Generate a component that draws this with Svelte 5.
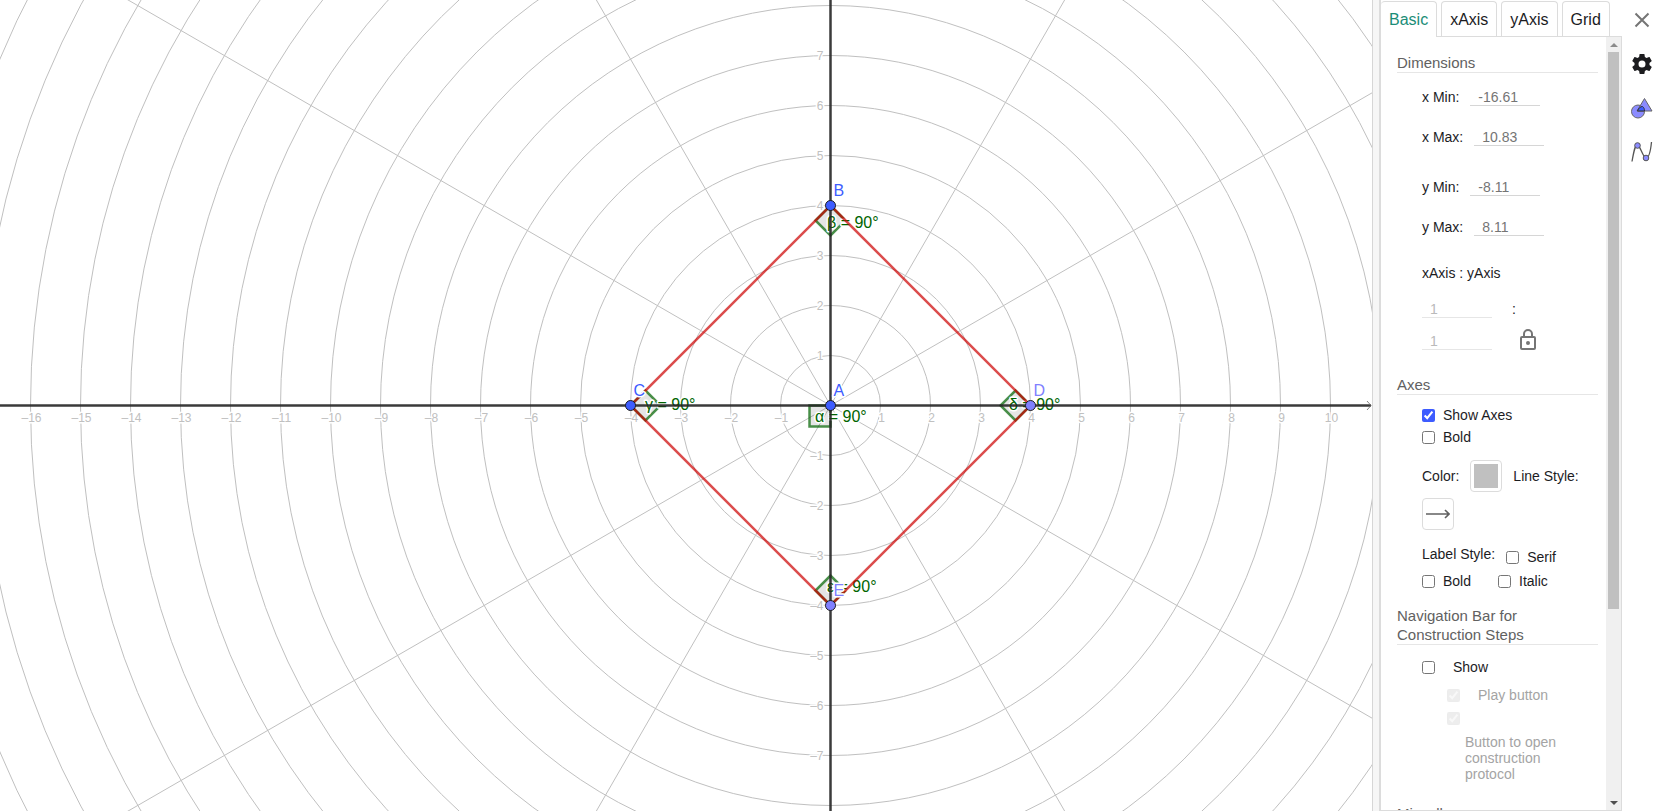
<script>
    const UNIT = 50;
    const OX = 830.5;
    const OY = 405.5;

    const range = (from, to) => Array.from({ length: to - from + 1 }, (_, i) => from + i);
    const px = (x) => OX + x * UNIT;
    const py = (y) => OY - y * UNIT;
    const label = (n) => (n < 0 ? "–" + -n : "" + n);

    const circles = range(1, 19);
    const rays = [30, 60, 120, 150].map((deg) => {
        const a = (deg * Math.PI) / 180;
        return { dx: Math.cos(a) * 1000, dy: Math.sin(a) * 1000 };
    });
    const xTicks = range(-16, 10).filter((n) => n !== 0);
    const yTicks = range(-7, 7).filter((n) => n !== 0);

    // free points are solid blue, dependent ones lighter
    const points = [
        { name: "A", x: 0, y: 0, color: "#3d5cff" },
        { name: "B", x: 0, y: 4, color: "#3d5cff" },
        { name: "C", x: -4, y: 0, color: "#3d5cff" },
        { name: "D", x: 4, y: 0, color: "#8080ff" },
        { name: "E", x: 0, y: -4, color: "#8080ff" },
    ];

    const angles = [
        { name: "α", x: 0, y: 0, path: "h-21v21h21z", lx: 815, ly: 422 },
        { name: "β", x: 0, y: 4, path: "l-15 15l15 15l15 -15z", lx: 827, ly: 228 },
        { name: "γ", x: -4, y: 0, path: "l15 -15l15 15l-15 15z", lx: 645, ly: 410 },
        { name: "δ", x: 4, y: 0, path: "l-15 -15l-15 15l15 15z", lx: 1009, ly: 410 },
        { name: "ε", x: 0, y: -4, path: "l-15 -15l15 -15l15 15z", lx: 827, ly: 592 },
    ];

    const tabs = ["Basic", "xAxis", "yAxis", "Grid"];
    let activeTab = $state("Basic");

    let limits = $state([
        { id: "xmin", label: "x Min:", value: "-16.61" },
        { id: "xmax", label: "x Max:", value: "10.83" },
        { id: "ymin", label: "y Min:", value: "-8.11" },
        { id: "ymax", label: "y Max:", value: "8.11" },
    ]);

    let showAxes = $state(true);
    let boldAxes = $state(false);
    let serif = $state(false);
    let boldLabels = $state(false);
    let italic = $state(false);
    let showNav = $state(false);

    let content;
    function scrollPanel(step) {
        content.scrollBy({ top: step, behavior: "smooth" });
    }
</script>

<div class="app">
    <main class="graphics">
        <svg class="plane" viewBox="0 0 1372 811" preserveAspectRatio="xMinYMid slice">
            <g class="grid">
                {#each circles as n}
                    <circle cx={OX} cy={OY} r={n * UNIT} />
                {/each}
                {#each rays as r}
                    <line x1={OX - r.dx} y1={OY + r.dy} x2={OX + r.dx} y2={OY - r.dy} />
                {/each}
            </g>

            <g class="ticks">
                {#each xTicks as n}
                    <text x={px(n) + 1} y={OY + 16} text-anchor="middle">{label(n)}</text>
                {/each}
                {#each yTicks as n}
                    <text x={OX - 7} y={py(n) + 4} text-anchor="end">{label(n)}</text>
                {/each}
            </g>

            {#each angles as a}
                <path class="angle" d="M{px(a.x)} {py(a.y)}{a.path}" />
            {/each}
            {#each angles as a}
                <text class="angle_label" x={a.lx} y={a.ly}>{a.name} = 90°</text>
            {/each}

            <path class="square" d="M{px(0)} {py(4)}L{px(4)} {py(0)}L{px(0)} {py(-4)}L{px(-4)} {py(0)}z" />

            {#if showAxes}
                <g class="axes" class:bold={boldAxes}>
                    <line x1="0" y1={OY} x2="1371" y2={OY} />
                    <line x1={OX} y1="0" x2={OX} y2="811" />
                    <path d="M1367 401l4 4.500l-4 4.500" />
                </g>
            {/if}

            {#each points as p}
                <circle class="point" cx={px(p.x)} cy={py(p.y)} r="5" fill={p.color} />
                <text class="point_label" x={px(p.x) + 3} y={py(p.y) - 10} fill={p.color}>{p.name}</text>
            {/each}
        </svg>
    </main>

    <div class="splitter"></div>

    <section class="panel">
        <nav class="tabs">
            {#each tabs as t}
                <button class="tab" class:active={activeTab === t} onclick={() => (activeTab = t)}>{t}</button>
            {/each}
        </nav>

        <div class="body">
            <div class="content" bind:this={content}>
                <h2>Dimensions</h2>
                <div class="limits">
                    {#each limits as l}
                        <div class="limit">
                            <label for={l.id}>{l.label}</label>
                            <input id={l.id} type="text" bind:value={l.value} />
                        </div>
                    {/each}
                </div>
                <div class="ratio_title">xAxis : yAxis</div>
                <div class="ratio">
                    <input type="text" value="1" aria-label="xAxis ratio" disabled />
                    <span>:</span>
                </div>
                <div class="ratio">
                    <input type="text" value="1" aria-label="yAxis ratio" disabled />
                    <button class="lock" aria-label="Lock ratio">
                        <svg width="24" height="24" viewBox="0 0 24 24" fill="none" stroke="#757575" stroke-width="2">
                            <rect x="5" y="8" width="14" height="12" rx="1" />
                            <path d="M8 8V5a4 4 0 0 1 8 0v3" />
                            <circle cx="12" cy="14" r="2" fill="#757575" stroke="none" />
                        </svg>
                    </button>
                </div>

                <h2 class="section">Axes</h2>
                <div class="checks">
                    <label class="check"><input type="checkbox" bind:checked={showAxes} />Show Axes</label>
                    <label class="check"><input type="checkbox" bind:checked={boldAxes} />Bold</label>
                </div>
                <div class="styles">
                    <span>Color:</span>
                    <button class="box" aria-label="Color"><span class="swatch"></span></button>
                    <span>Line Style:</span>
                    <button class="box" aria-label="Line Style">
                        <svg width="24" height="24" viewBox="0 0 24 24" fill="none" stroke="#616161" stroke-width="1.6">
                            <path d="M0 12h23M19 8l4 4l-4 4" />
                        </svg>
                    </button>
                </div>
                <div class="label_style">
                    <span class="caption">Label Style:</span>
                    <label class="check"><input type="checkbox" bind:checked={serif} />Serif</label>
                </div>
                <div class="label_style second">
                    <label class="check"><input type="checkbox" bind:checked={boldLabels} />Bold</label>
                    <label class="check"><input type="checkbox" bind:checked={italic} />Italic</label>
                </div>

                <h2 class="nav_title">Navigation Bar for Construction Steps</h2>
                <div class="nav_options">
                    <label class="check wide"><input type="checkbox" bind:checked={showNav} />Show</label>
                    <label class="check wide sub" class:off={!showNav}>
                        <input type="checkbox" checked disabled={!showNav} />Play button
                    </label>
                    <label class="protocol" class:off={!showNav}>
                        <input type="checkbox" checked disabled={!showNav} />
                        <span>Button to open construction protocol</span>
                    </label>
                </div>

                <h2 class="misc">Miscellaneous</h2>
            </div>

            <div class="scrollbar">
                <button class="arrow" aria-label="Scroll up" onclick={() => scrollPanel(-40)}>
                    <svg width="8" height="4" viewBox="0 0 8 4"><path d="M4 0l4 4H0z" fill="#8b8b8b" /></svg>
                </button>
                <div class="track"><div class="thumb"></div></div>
                <button class="arrow" aria-label="Scroll down" onclick={() => scrollPanel(40)}>
                    <svg width="8" height="4" viewBox="0 0 8 4"><path d="M0 0h8l-4 4z" fill="#505050" /></svg>
                </button>
            </div>
        </div>
    </section>

    <aside class="rail">
        <button aria-label="Close">
            <svg width="24" height="24" viewBox="0 0 24 24" fill="none" stroke="#757575" stroke-width="2">
                <path d="M5.500 5.500l13 13M18.500 5.500l-13 13" />
            </svg>
        </button>
        <button aria-label="Settings">
            <svg width="24" height="24" viewBox="0 0 24 24" fill="#1c1c1f">
                <path d="M19.430 12.980c.04-.32.07-.64.07-.98s-.03-.66-.07-.98l2.110-1.650c.19-.15.24-.42.12-.64l-2-3.460c-.12-.22-.39-.3-.61-.22l-2.490 1c-.52-.4-1.080-.73-1.690-.98l-.38-2.650C14.460 2.180 14.250 2 14 2h-4c-.25 0-.46.18-.49.42l-.38 2.650c-.61.25-1.170.59-1.690.98l-2.490-1c-.23-.09-.49 0-.61.22l-2 3.460c-.13.22-.07.49.12.64l2.110 1.650c-.04.32-.07.65-.07.98s.03.66.07.98l-2.110 1.650c-.19.15-.24.42-.12.64l2 3.460c.12.22.39.3.61.22l2.490-1c.52.4 1.080.73 1.690.98l.38 2.650c.03.24.24.42.49.42h4c.25 0 .46-.18.49-.42l.38-2.650c.61-.25 1.170-.59 1.690-.98l2.490 1c.23.09.49 0 .61-.22l2-3.460c.12-.22.07-.49-.12-.64zM12 15.500a3.500 3.500 0 1 1 0-7a3.500 3.500 0 0 1 0 7z" />
            </svg>
        </button>
        <button aria-label="Graphics">
            <svg width="24" height="24" viewBox="0 0 24 24" stroke="#666">
                <circle cx="8" cy="15.500" r="6.500" fill="#8b8bff" />
                <path d="M14.500 2.500l7.500 12.500H7z" fill="#8b8bff" />
                <path d="M7.500 15c1-3 3-4.500 5-4.500c1.500 1 2 2.500 2 4.500z" fill="#3d5cff" stroke="#333" />
            </svg>
        </button>
        <button aria-label="Functions">
            <svg width="24" height="24" viewBox="0 0 24 24" fill="none" stroke="#555" stroke-width="1.300">
                <path d="M2 21.500C4 10 5 5 7.500 5s5.500 13 8.500 13s4.500-6 5.500-16" />
                <circle cx="7.500" cy="5.500" r="2.800" fill="#8b8bff" stroke-width="1" />
                <circle cx="16" cy="18" r="2.800" fill="#8b8bff" stroke-width="1" />
            </svg>
        </button>
    </aside>
</div>

<style>
    :global(body){
        margin: 0;
        background: white;
    }
    .app{
        display: flex;
        height: 100vh;
        overflow: hidden;
        font-family: "Liberation Sans", Arial, sans-serif;
        font-size: 14px;
        color: #1c1c1f;
    }
    button{
        font-family: inherit;
        background: none;
        border: none;
        padding: 0;
        cursor: pointer;
    }

    /* drawing area */
    .graphics{
        flex: 1;
        min-width: 0;
        overflow: hidden;
    }
    .plane{
        display: block;
        width: 100%;
        height: 100%;
    }
    .grid{
        fill: none;
        stroke: #c0c0c0;
        stroke-width: 1;
    }
    .axes{
        fill: none;
        stroke: #252525;
        stroke-opacity: 0.9;
        stroke-width: 2.5;
    }
    .axes.bold{
        stroke-width: 4;
    }
    .axes path{
        stroke-width: 1;
        stroke: #777;
    }
    .plane text{
        paint-order: stroke;
        stroke: white;
        stroke-width: 3;
        stroke-linejoin: round;
    }
    .ticks text{
        font-size: 12px;
        fill: #c0c0c0;
    }
    .angle{
        fill: rgba(0, 0, 0, 0.1);
        stroke: rgba(0, 100, 0, 0.7);
        stroke-width: 2.5;
    }
    .square{
        fill: none;
        stroke: rgba(204, 0, 0, 0.7);
        stroke-width: 2.5;
    }
    .angle_label, .point_label{
        font-size: 16px;
    }
    .angle_label{
        fill: #006400;
    }
    .point{
        stroke: #1c1c1f;
        stroke-width: 1;
    }

    .splitter{
        flex: none;
        width: 6px;
        background: #f6f6f6;
        border-left: 1px solid #d6d6d6;
    }

    /* settings panel */
    .panel{
        flex: none;
        display: flex;
        flex-direction: column;
        width: 243px;
        box-sizing: border-box;
        border-left: 2px solid #dcdcdc;
    }
    .tabs{
        display: flex;
        gap: 4px;
        padding-top: 1px;
        border-bottom: 1px solid #dcdcdc;
    }
    .tab{
        height: 35px;
        padding: 2px 8px 0;
        border: 1px solid #dcdcdc;
        border-bottom: none;
        border-radius: 4px 4px 0 0;
        font-size: 16px;
        color: #1c1c1f;
    }
    .tab.active{
        margin-bottom: -1px;
        padding-bottom: 1px;
        height: 36px;
        border-left: none;
        background: white;
        color: #1b8d77;
    }
    .body{
        flex: 1;
        min-height: 0;
        display: flex;
        border-right: 1px solid #dcdcdc;
        border-bottom: 1px solid #dcdcdc;
    }
    .content{
        flex: 1;
        overflow-y: auto;
        scrollbar-width: none;
        padding: 16px 8px 16px 16px;
    }
    h2{
        margin: 0;
        font-size: 15px;
        font-weight: normal;
        line-height: 19px;
        color: #616161;
        border-bottom: 1px solid #e6e6e6;
    }
    .content > div{
        margin-left: 25px;
    }
    .limits{
        padding-top: 4px;
    }
    .limit{
        display: flex;
        align-items: center;
        gap: 11px;
        height: 40px;
    }
    .limit:nth-child(2){
        margin-bottom: 10px;
    }
    input[type=text]{
        box-sizing: border-box;
        width: 70px;
        height: 18px;
        padding: 0 8px;
        border: none;
        border-bottom: 1px solid #d6d6d6;
        background: none;
        font-family: inherit;
        font-size: 14px;
        color: #757575;
    }
    input[type=text]:disabled{
        color: #bababa;
        border-color: #e6e6e6;
    }
    .ratio_title{
        margin-top: 10px;
        margin-bottom: 4px;
        line-height: 32px;
    }
    .ratio{
        display: flex;
        align-items: center;
        height: 32px;
        gap: 20px;
    }
    .lock{
        display: flex;
        margin-left: 4px;
    }
    .section{
        margin-top: 18px;
    }
    .checks{
        padding-top: 9px;
    }
    .check{
        display: flex;
        align-items: center;
        gap: 8px;
        height: 22px;
    }
    input[type=checkbox]{
        flex: none;
        width: 13px;
        height: 13px;
        margin: 0;
        accent-color: #3d5cff;
    }
    input[type=checkbox]:disabled{
        opacity: 0.4;
    }
    .styles{
        display: flex;
        flex-wrap: wrap;
        align-items: center;
        gap: 6px 11px;
        padding-top: 12px;
    }
    .box{
        display: flex;
        align-items: center;
        justify-content: center;
        width: 32px;
        height: 32px;
        border: 1px solid #dcdcdc;
        border-radius: 4px;
    }
    .swatch{
        width: 24px;
        height: 24px;
        background: #c0c0c0;
    }
    .label_style{
        display: flex;
        gap: 11px;
        padding-top: 16px;
    }
    .label_style .caption{
        line-height: 16px;
    }
    .label_style.second{
        gap: 27px;
        padding-top: 2px;
    }
    .nav_title{
        margin-top: 14px;
        padding-right: 32px;
    }
    .nav_options{
        padding-top: 8px;
    }
    .check.wide{
        gap: 18px;
        height: 28px;
    }
    .check.sub, .protocol{
        margin-left: 25px;
    }
    .off{
        color: #a4a4a4;
    }
    .protocol{
        display: flex;
        flex-direction: column;
        gap: 9px;
        padding-top: 3px;
        line-height: 16px;
    }
    .protocol span{
        width: 112px;
        padding-left: 18px;
    }
    .misc{
        margin-top: 22px;
    }

    .scrollbar{
        flex: none;
        display: flex;
        flex-direction: column;
        width: 15px;
        background: #f0f0f0;
    }
    .arrow{
        display: flex;
        align-items: center;
        justify-content: center;
        height: 15px;
    }
    .track{
        flex: 1;
        padding: 0 2px;
    }
    .thumb{
        height: 75%;
        background: #c0c0c0;
    }

    /* icons at the right edge */
    .rail{
        flex: none;
        display: flex;
        flex-direction: column;
        align-items: center;
        gap: 20px;
        width: 40px;
        padding-top: 8px;
    }
    .rail svg{
        display: block;
    }
</style>
